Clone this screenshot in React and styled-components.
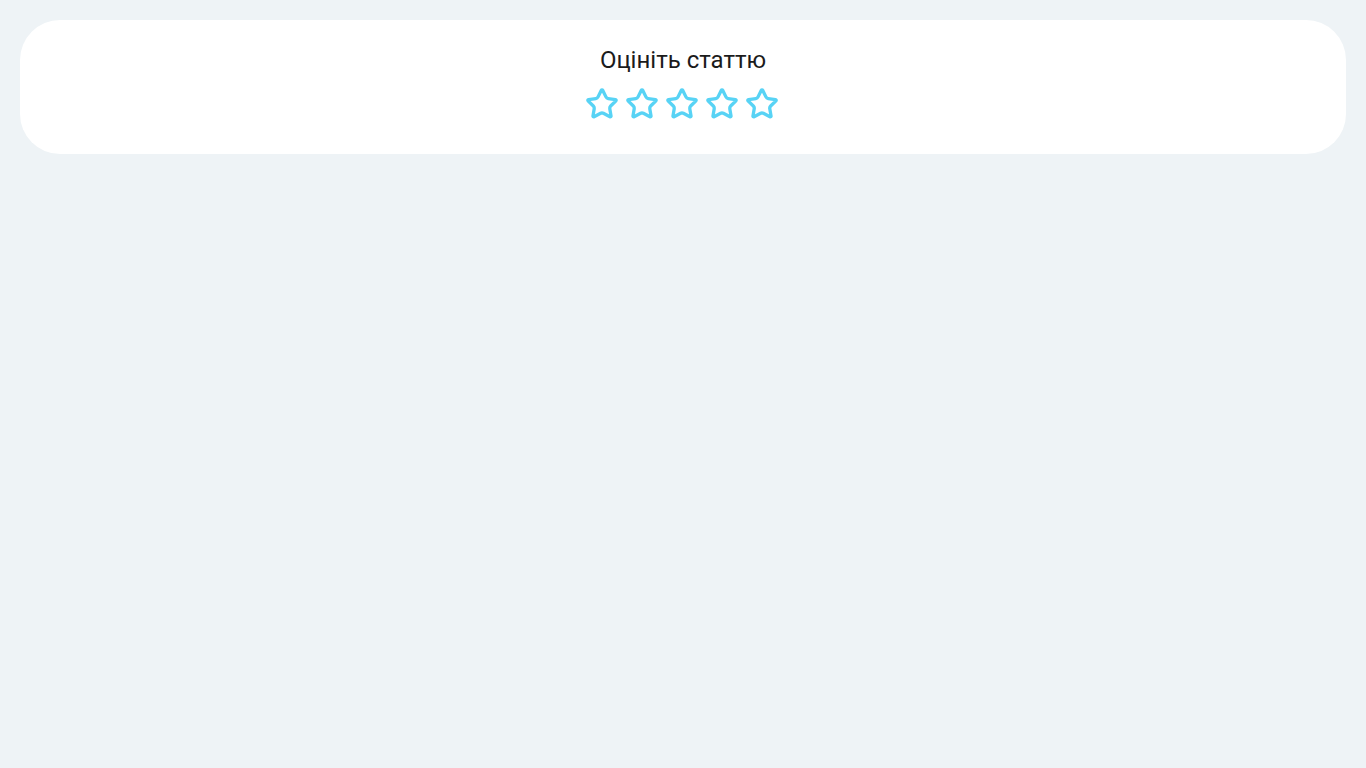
import React, { useState } from "react";
import styled, { createGlobalStyle } from "styled-components";

const GlobalStyle = createGlobalStyle`
  html, body {
    margin: 0;
    padding: 0;
    background: #eef3f6;
    font-family: Roboto, "Noto Sans", Arial, sans-serif;
  }
`;

const Page = styled.div`
  min-height: 100vh;
  padding: 20px;
  box-sizing: border-box;
`;

const Card = styled.section`
  background: #ffffff;
  border-radius: 40px;
  padding: 26px 20px 33px;
  display: flex;
  flex-direction: column;
  align-items: center;
  gap: 13px;
`;

const Title = styled.h3`
  margin: 0;
  font-size: 24px;
  font-weight: 400;
  line-height: 28px;
  color: #1b1b1b;
`;

const Stars = styled.div`
  display: flex;
  gap: 6px;
  margin-right: 2px;
`;

const StarButton = styled.button`
  border: 0;
  padding: 0;
  background: none;
  cursor: pointer;
  width: 34px;
  height: 34px;
  display: flex;
  color: #58d3f5;

  & svg {
    width: 100%;
    height: 100%;
  }
`;

function Star({ filled }) {
  return (
    <svg viewBox="0 0 24 24" fill={filled ? "currentColor" : "none"} stroke="currentColor" strokeWidth="2.35" strokeLinecap="round" strokeLinejoin="round">
      <path d="M11.525 2.295a.53.53 0 0 1 .95 0l2.31 4.679a2.123 2.123 0 0 0 1.595 1.16l5.166.756a.53.53 0 0 1 .294.904l-3.736 3.638a2.123 2.123 0 0 0-.611 1.878l.882 5.14a.53.53 0 0 1-.771.56l-4.618-2.428a2.122 2.122 0 0 0-1.973 0L6.396 21.01a.53.53 0 0 1-.77-.56l.881-5.139a2.122 2.122 0 0 0-.611-1.879L2.16 9.795a.53.53 0 0 1 .294-.906l5.165-.755a2.122 2.122 0 0 0 1.597-1.160z" />
    </svg>
  );
}

export default function App() {
  const [rating, setRating] = useState(0);
  return (
    <>
      <GlobalStyle />
      <Page>
        <Card>
          <Title>Оцініть статтю</Title>
          <Stars>
            {[1, 2, 3, 4, 5].map((n) => (
              <StarButton key={n} aria-label={`${n}`} onClick={() => setRating(n)}>
                <Star filled={n <= rating} />
              </StarButton>
            ))}
          </Stars>
        </Card>
      </Page>
    </>
  );
}
